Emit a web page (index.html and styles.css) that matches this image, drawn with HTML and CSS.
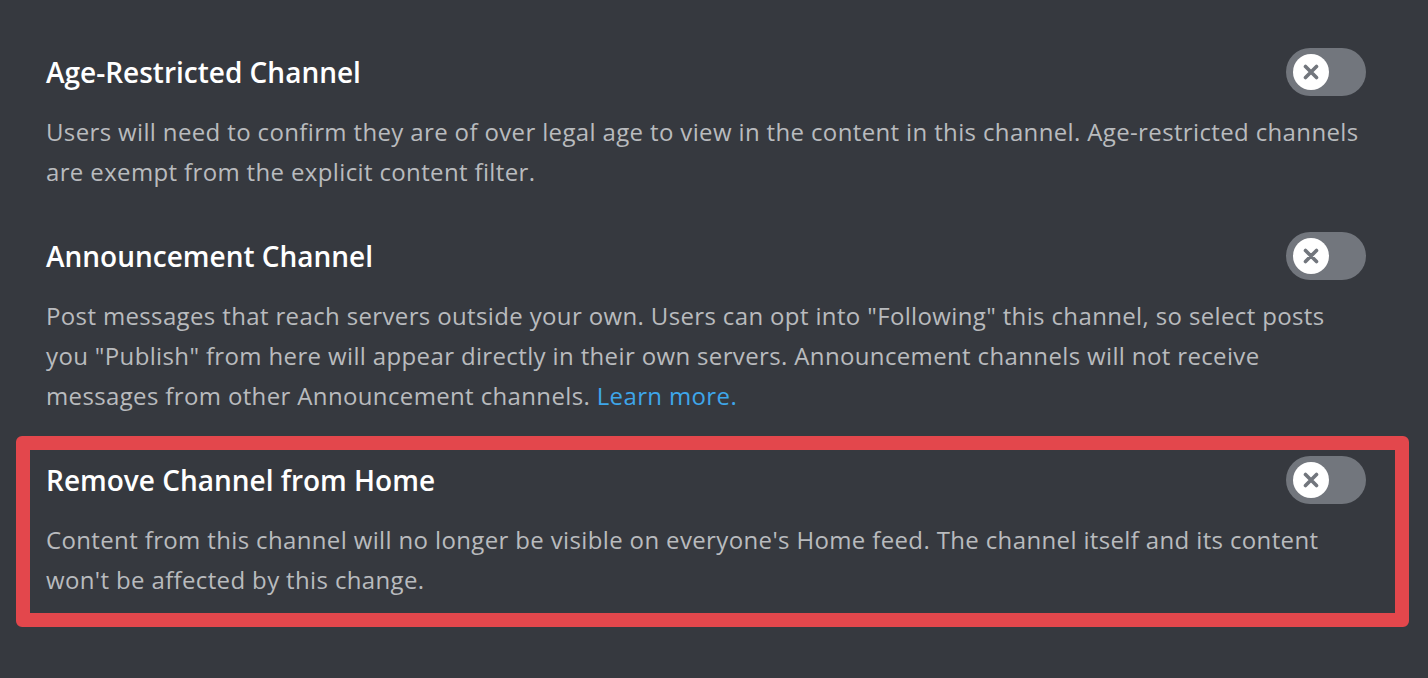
FILE: index.html
```html
<!DOCTYPE html>
<html lang="en">
<head>
    <meta charset="UTF-8">
    <meta name="viewport" content="width=device-width, initial-scale=1.0">
    <title>Channel Settings</title>
    <link rel="stylesheet" href="styles.css">
</head>
<body>
    <div class="settings">
        <div class="setting">
            <div class="setting-header">
                <h2 class="setting-title">Age-Restricted Channel</h2>
                <div class="toggle">
                    <span class="knob">
                        <svg width="16" height="16" viewBox="0 0 16 16"><path d="M2.5 2.5 L13.5 13.5 M13.5 2.5 L2.5 13.5" stroke="#72767d" stroke-width="3.6" stroke-linecap="round"/></svg>
                    </span>
                </div>
            </div>
            <p class="setting-desc">Users will need to confirm they are of over legal age to view in the content in this channel. Age-restricted channels are exempt from the explicit content filter.</p>
        </div>

        <div class="setting">
            <div class="setting-header">
                <h2 class="setting-title">Announcement Channel</h2>
                <div class="toggle">
                    <span class="knob">
                        <svg width="16" height="16" viewBox="0 0 16 16"><path d="M2.5 2.5 L13.5 13.5 M13.5 2.5 L2.5 13.5" stroke="#72767d" stroke-width="3.6" stroke-linecap="round"/></svg>
                    </span>
                </div>
            </div>
            <p class="setting-desc">Post messages that reach servers outside your own. Users can opt into "Following" this channel, so select posts you "Publish" from here will appear directly in their own servers. Announcement channels will not receive messages from other Announcement channels. <a href="#" class="learn-more">Learn more.</a></p>
        </div>

        <!-- highlighted one -->
        <div class="setting setting-highlight">
            <div class="setting-header">
                <h2 class="setting-title">Remove Channel from Home</h2>
                <div class="toggle">
                    <span class="knob">
                        <svg width="16" height="16" viewBox="0 0 16 16"><path d="M2.5 2.5 L13.5 13.5 M13.5 2.5 L2.5 13.5" stroke="#72767d" stroke-width="3.6" stroke-linecap="round"/></svg>
                    </span>
                </div>
            </div>
            <p class="setting-desc">Content from this channel will no longer be visible on everyone's Home feed. The channel itself and its content won't be affected by this change.</p>
        </div>
    </div>
</body>
</html>
```

FILE: styles.css
```css
body {
    margin: 0;
    background-color: #36393f;
    font-family: "Open Sans", "Noto Sans", sans-serif;
}

.settings {
    display: flex;
    flex-direction: column;
    padding-top: 48px;
}

.setting {
    padding: 0 62px 0 46px;
    margin-bottom: 40px;
}

.setting-header {
    display: flex;
    align-items: center;
    justify-content: space-between;
    height: 48px;
}

.setting-title {
    margin: 0;
    color: #ffffff;
    font-size: 28px;
    font-weight: 600;
    line-height: 40px;
}

.setting-desc {
    margin: 16px 0 0 0;
    color: #b9bbbe;
    font-size: 24px;
    letter-spacing: 0.36px;
    line-height: 40px;
}

.learn-more {
    color: #3ea6ea;
    text-decoration: none;
}

/* red outline around the last option */
.setting-highlight {
    margin: -20px 19px 0 16px;
    padding: 6px 29px 13px 16px;
    border: 14px solid #e3474c;
    border-radius: 6px;
}

.toggle {
    width: 80px;
    height: 48px;
    border-radius: 24px;
    background-color: #72767d;
    display: flex;
    align-items: center;
    padding-left: 7px;
    box-sizing: border-box;
    flex-shrink: 0;
}

.knob {
    width: 36px;
    height: 36px;
    border-radius: 50%;
    background-color: #ffffff;
    display: flex;
    align-items: center;
    justify-content: center;
}
```
